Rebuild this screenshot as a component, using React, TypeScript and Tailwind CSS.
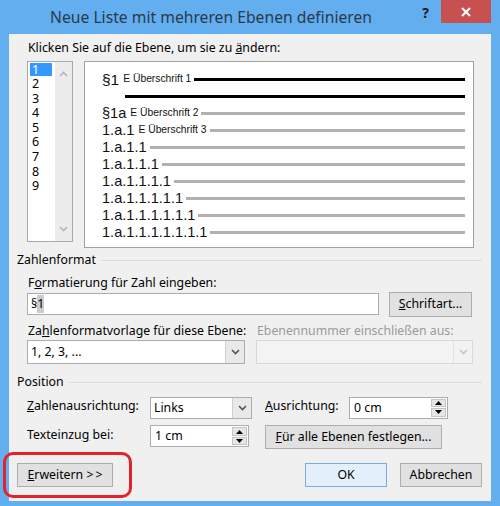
import React from "react";

const NUM_FONT = "font-['Liberation_Sans',Arial,sans-serif]";

function Chevron({ up = false, color = "#5a5a5a" }: { up?: boolean; color?: string }) {
  return (
    <svg width="9" height="6" viewBox="0 0 9 6">
      <polyline
        points={up ? "1,5 4.5,1.5 8,5" : "1,1 4.5,4.5 8,1"}
        fill="none"
        stroke={color}
        strokeWidth="1.6"
      />
    </svg>
  );
}

function Tri({ up = false }: { up?: boolean }) {
  return (
    <svg width="7" height="4" viewBox="0 0 7 4">
      <polygon points={up ? "0,4 3.5,0 7,4" : "0,0 3.5,4 7,0"} fill="#000" />
    </svg>
  );
}

function Button({
  children,
  className,
  primary = false,
}: {
  children: React.ReactNode;
  className: string;
  primary?: boolean;
}) {
  return (
    <div
      className={`flex items-center justify-center border ${
        primary ? "bg-[#e3effb] border-[#76ade6]" : "bg-[#e1e1e1] border-[#adadad]"
      } ${className}`}
    >
      {children}
    </div>
  );
}

function Select({
  value,
  className,
  disabled = false,
}: {
  value?: string;
  className: string;
  disabled?: boolean;
}) {
  return (
    <div
      className={`flex border ${
        disabled ? "border-[#d9d9d9] bg-[#f3f3f3]" : "border-[#abadb3] bg-white"
      } ${className}`}
    >
      <div className="flex-1 flex items-center pl-[3px]">{value}</div>
      <div
        className={`w-[19px] flex items-center justify-center border-l ${
          disabled ? "border-[#e2e2e2] bg-[#f3f3f3]" : "border-[#cfcfcf] bg-[#e9e9e9]"
        }`}
      >
        <Chevron color={disabled ? "#c4c4c4" : "#555"} />
      </div>
    </div>
  );
}

function Spinner({ value, className }: { value: string; className: string }) {
  return (
    <div className={`flex border border-[#abadb3] bg-white ${className}`}>
      <div className="flex-1 flex items-center pl-[4px]">{value}</div>
      <div className="w-[17px] flex flex-col p-px gap-px">
        <div className="flex-1 flex items-center justify-center bg-[#e6e6e6] border border-[#c4c4c4]">
          <Tri up />
        </div>
        <div className="flex-1 flex items-center justify-center bg-[#e6e6e6] border border-[#c4c4c4]">
          <Tri />
        </div>
      </div>
    </div>
  );
}

function GroupHeader({ title }: { title: string }) {
  return (
    <div className="flex items-center pl-[8px] pr-[9px] leading-[16px]">
      <span>{title}</span>
      <div className="flex-1 h-px bg-[#dcdcdc] ml-[5px]" />
    </div>
  );
}

type Level = { num?: string; label?: string; dark?: boolean; indent?: string; big?: boolean };

const levels: Level[] = [
  { num: "§1", label: "E Überschrift 1", dark: true, big: true },
  { dark: true, indent: "pl-[40px]" },
  { num: "§1a", label: "E Überschrift 2" },
  { num: "1.a.1", label: "E Überschrift 3" },
  { num: "1.a.1.1" },
  { num: "1.a.1.1.1" },
  { num: "1.a.1.1.1.1" },
  { num: "1.a.1.1.1.1.1" },
  { num: "1.a.1.1.1.1.1.1" },
  { num: "1.a.1.1.1.1.1.1.1" },
];

function PreviewRow({ level }: { level: Level }) {
  return (
    <div className={`h-[17px] flex items-center pr-[8px] ${level.indent ?? "pl-[17px]"}`}>
      {level.num && (
        <span
          className={`${NUM_FONT} ${
            level.big ? "text-[15.5px]" : "text-[14.6px]"
          } leading-none text-[#111]`}
        >
          {level.num}
        </span>
      )}
      {level.label && (
        <span className={`${NUM_FONT} text-[10.3px] leading-none ml-[4px] text-[#111]`}>
          {level.label}
        </span>
      )}
      <div
        className={`flex-1 h-[3px] ${level.num ? "ml-[3px]" : ""} ${
          level.dark ? "bg-black" : "bg-[#b1b1b1]"
        }`}
      />
    </div>
  );
}

export default function App() {
  const listItems = ["1", "2", "3", "4", "5", "6", "7", "8", "9"];
  return (
    <div className="relative w-[500px] h-[506px] bg-[#62aeef] flex flex-col font-['Noto_Sans','Open_Sans',sans-serif] text-black select-none overflow-hidden">
      {/* title bar */}
      <div className="h-[34px] flex items-start">
        <div className="flex-1 pl-[50px] pt-[6px] text-[15.7px] leading-[22px] text-[#2a3a4c]">
          Neue Liste mit mehreren Ebenen definieren
        </div>
        <div className="pt-[5px] mr-[12px] text-[14px] font-bold leading-[16px] text-[#1b1b1b]">?</div>
        <div className="w-[50px] h-[23px] mr-[9px] bg-[#c75050] flex items-center justify-center">
          <svg width="10" height="10" viewBox="0 0 10 10">
            <path d="M1 1 L9 9 M9 1 L1 9" stroke="#fff" strokeWidth="2" />
          </svg>
        </div>
      </div>

      {/* client area */}
      <div className="mx-[9px] mb-[5px] flex-1 bg-[#f0f0f0] flex flex-col text-[12.3px]">
        <div className="pl-[19px] mt-[6px] leading-[16px]">
          Klicken Sie auf die Ebene, um sie zu <span className="underline">ä</span>ndern:
        </div>

        <div className="flex items-start pl-[18px] mt-[5px] gap-[11px]">
          {/* level list */}
          <div className="w-[46px] h-[181px] border border-[#a9a9a9] bg-white flex">
            <div className="flex-1 pt-[1px] pl-[2px] flex flex-col gap-[1.6px]">
              {listItems.map((n, i) => (
                <div
                  key={n}
                  className={`h-[13px] w-[22px] pl-[2px] flex items-center leading-[12px] text-[12.5px] ${
                    i === 0 ? "bg-[#3399ff] text-white" : ""
                  }`}
                >
                  {n}
                </div>
              ))}
            </div>
            <div className="w-[17px] bg-[#ececec] flex flex-col items-center justify-between py-[9px]">
              <Chevron up color="#b5b5b5" />
              <Chevron color="#b5b5b5" />
            </div>
          </div>

          {/* preview */}
          <div className="w-[390px] h-[187px] border border-[#a0a0a0] bg-white pt-[9px]">
            {levels.map((l, i) => (
              <PreviewRow key={i} level={l} />
            ))}
          </div>
        </div>

        {/* Zahlenformat */}
        <div className="mt-[4px]">
          <GroupHeader title="Zahlenformat" />
        </div>
        <div className="pl-[19px] mt-[7px] leading-[16px]">
          F<span className="underline">o</span>rmatierung für Zahl eingeben:
        </div>
        <div className="flex items-start pl-[18px] mt-[1px] gap-[10px]">
          <div className="w-[352px] h-[22px] mt-[1px] border border-[#abadb3] bg-white flex items-center pl-[3px]">
            <span>§</span>
            <span className="bg-[#cccccc]">1</span>
          </div>
          <Button className="w-[83px] h-[25px]">
            <span>
              <span className="underline">S</span>chriftart...
            </span>
          </Button>
        </div>

        <div className="flex pl-[19px] mt-[6px] leading-[16px]">
          <div className="w-[229px]">
            Za<span className="underline">h</span>lenformatvorlage für diese Ebene:
          </div>
          <div className="text-[#9a9a9a]">Ebenennummer einschließen aus:</div>
        </div>
        <div className="flex pl-[18px] mt-[1px] gap-[11px]">
          <Select value="1, 2, 3, ..." className="w-[218px] h-[24px]" />
          <Select disabled className="w-[217px] h-[24px]" />
        </div>

        {/* Position */}
        <div className="mt-[10px]">
          <GroupHeader title="Position" />
        </div>
        <div className="flex items-center pl-[18px] mt-[7px]">
          <div className="w-[123px] mb-[4px]">
            <span className="underline">Z</span>ahlenausrichtung:
          </div>
          <Select value="Links" className="w-[102px] h-[22px]" />
          <div className="ml-[13px] w-[84px] mb-[4px]">
            <span className="underline">A</span>usrichtung:
          </div>
          <Spinner value="0 cm" className="w-[99px] h-[22px] -mt-[1px]" />
        </div>
        <div className="flex items-center pl-[18px] mt-[6px]">
          <div className="w-[123px] mb-[4px]">
            Texteinzu<span className="underline">g</span> bei:
          </div>
          <Spinner value="1 cm" className="w-[99px] h-[22px] self-start" />
          <Button className="ml-[16px] w-[177px] h-[24px]">
            <span>
              <span className="underline">F</span>ür alle Ebenen festlegen...
            </span>
          </Button>
        </div>

        <div className="flex pl-[8px] pr-[9px] mt-[14px]">
          <Button className="w-[96px] h-[24px]">
            <span>
              <span className="underline">E</span>rweitern &gt;&thinsp;&gt;
            </span>
          </Button>
          <div className="flex-1" />
          <Button primary className="w-[82px] h-[24px]">
            OK
          </Button>
          <Button className="ml-[13px] w-[82px] h-[24px]">Abbrechen</Button>
        </div>
      </div>

      {/* highlight ring around the expand button */}
      <div className="absolute left-[3px] top-[452px] w-[129px] h-[46px] border-[3px] border-[#e2232a] rounded-[10px] pointer-events-none" />
    </div>
  );
}
